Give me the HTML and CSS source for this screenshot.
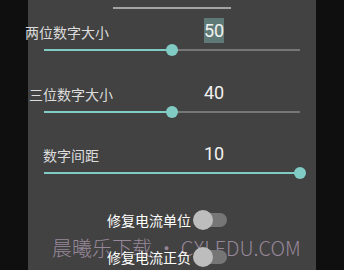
FILE: index.html
```html
<!DOCTYPE html>
<html>
<head>
<meta charset="utf-8">
<link rel="stylesheet" href="styles.css">
</head>
<body>
<div class="panel">
  <div class="title">大小</div>
  <div class="divider"></div>

  <div class="row first">
    <span class="label l1">两位数字大小</span>
    <span class="value sel">50</span>
  </div>
  <div class="slider s1">
    <div class="track"><div class="fill" style="width:50%"></div></div>
    <div class="thumb" style="left:50%"></div>
  </div>

  <div class="row second">
    <span class="label l2">三位数字大小</span>
    <span class="value">40</span>
  </div>
  <div class="slider">
    <div class="track"><div class="fill" style="width:50%"></div></div>
    <div class="thumb" style="left:50%"></div>
  </div>

  <div class="row third">
    <span class="label l3">数字间距</span>
    <span class="value">10</span>
  </div>
  <div class="slider s3">
    <div class="track"><div class="fill" style="width:100%"></div></div>
    <div class="thumb" style="left:100%"></div>
  </div>

  <div class="watermark">晨曦乐下载 • CXLEDU.COM</div>

  <div class="toggle t1">
    <span class="toggle-label">修复电流单位</span>
    <span class="switch"><span class="sw-track"></span><span class="sw-thumb"></span></span>
  </div>
  <div class="toggle t2">
    <span class="toggle-label">修复电流正负</span>
    <span class="switch"><span class="sw-track"></span><span class="sw-thumb"></span></span>
  </div>
</div>
</body>
</html>
```

FILE: styles.css
```css
html, body {
  margin: 0;
  padding: 0;
  background: #0f0f0f;
  height: 270px;
  overflow: hidden;
}

.panel {
  position: relative;
  display: flex;
  flex-direction: column;
  margin-left: 28px;
  width: 288px;
  height: 270px;
  background: #424242;
  font-family: "Noto Sans CJK SC", "Noto Sans", sans-serif;
  color: #e6e6e6;
}

.title {
  margin-top: -18px;
  height: 16px;
  line-height: 16px;
  font-size: 16px;
  padding-left: 135px;
  color: #ffffff;
}

.divider {
  margin-top: 9px;
  margin-left: 85px;
  width: 118px;
  height: 2px;
  background: #a4a4a4;
}

.row {
  display: grid;
  grid-template-columns: 176px auto;
  align-items: center;
  height: 26px;
}

.row.first { margin-top: 8px; }
.row.second { margin-top: 25px; }
.row.third { margin-top: 24px; }

.label {
  font-size: 14px;
  line-height: 26px;
  color: #dcdcdc;
  white-space: nowrap;
  margin-top: 2px;
}

.l1 { margin-left: -3px; }
.l2 { margin-left: 1px; }
.l3 { margin-left: 15px; }

.value {
  justify-self: start;
  font-family: Roboto, "Liberation Sans", sans-serif;
  font-size: 18px;
  line-height: 25px;
  color: #f2f2f2;
  width: 20px;
  text-align: center;
}

.value.sel {
  background: #5f7a76;
}

.slider {
  position: relative;
  height: 12px;
  margin-left: 16px;
  width: 256px;
  margin-top: 1px;
}

.track {
  margin-top: 5px;
  height: 2px;
  background: #767676;
}

.fill {
  height: 2px;
  background: #80cbc4;
}

.thumb {
  position: absolute;
  top: 0;
  width: 12px;
  height: 12px;
  margin-left: -6px;
  border-radius: 50%;
  background: #80cbc4;
}

.toggle {
  display: flex;
  align-items: center;
  gap: 2px;
  height: 26px;
  padding-left: 79px;
  position: relative;
}

.toggle.t1 { margin-top: 30px; }
.toggle.t2 { margin-top: 11px; }

.toggle-label {
  font-size: 14px;
  line-height: 26px;
  color: #ffffff;
  white-space: nowrap;
}

.switch {
  position: relative;
  width: 34px;
  height: 20px;
}

.sw-track {
  position: absolute;
  left: 3px;
  top: 3px;
  width: 31px;
  height: 14px;
  border-radius: 7px;
  background: #767676;
}

.sw-thumb {
  position: absolute;
  left: 0;
  top: 0;
  width: 20px;
  height: 20px;
  border-radius: 50%;
  background: #bdbdbd;
}

.watermark {
  position: absolute;
  left: 24px;
  top: 238px;
  font-size: 20px;
  line-height: 20px;
  font-weight: 300;
  color: #978799;
  white-space: nowrap;
}
```
